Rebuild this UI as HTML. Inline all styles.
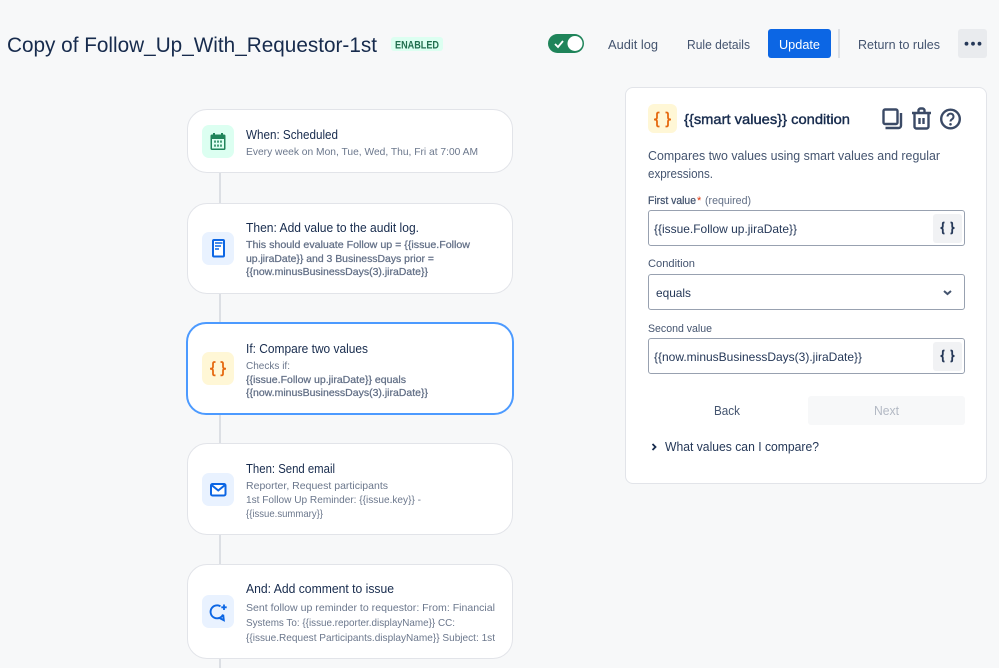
<!DOCTYPE html>
<html lang="en">
<head>
<meta charset="utf-8">
<title>Copy of Follow_Up_With_Requestor-1st</title>
<style>
html,body{margin:0;padding:0;background:#f7f8f9;}
body{width:999px;height:668px;overflow:hidden;position:relative;font-family:"Liberation Sans",sans-serif;}
.b{position:absolute;box-sizing:border-box;}
.card{left:187px;width:326px;background:#fff;border:1.5px solid #e2e4e9;border-radius:20px;}
.ic{left:202px;width:32px;height:33px;border-radius:7px;}
.inp{left:648px;width:317px;height:36px;background:#fff;border:1.5px solid #98a1b0;border-radius:3px;}
.br{left:933px;width:29px;height:29px;background:#f1f2f4;border-radius:3px;}
svg{position:absolute;left:0;top:0;}
text{font-family:"Liberation Sans",sans-serif;}
.t{font-size:12.5px;fill:#172b4d;}
.s{font-size:10.5px;fill:#6b778c;}
.sb{font-size:10.5px;fill:#626f86;stroke:#626f86;stroke-width:.25px;}
.h{font-size:12.5px;fill:#44546f;}
.l{font-size:11px;fill:#44546f;}
.v{font-size:12px;fill:#253858;}
</style>
</head>
<body>
<div class="b" style="left:219px;top:170px;width:2px;height:498px;background:#dcdfe4;"></div>

<div class="b card" style="top:109px;height:64px;"></div>
<div class="b card" style="top:203px;height:91px;"></div>
<div class="b card" style="top:322px;height:93px;left:186px;width:328px;border:2px solid #4c9aff;"></div>
<div class="b card" style="top:443px;height:92px;"></div>
<div class="b card" style="top:564px;height:95px;"></div>

<div class="b ic" style="top:125px;background:#dcfff1;"></div>
<div class="b ic" style="top:232px;background:#e9f2ff;"></div>
<div class="b ic" style="top:352px;background:#fff7d6;"></div>
<div class="b ic" style="top:473px;background:#e9f2ff;"></div>
<div class="b ic" style="top:595px;background:#e9f2ff;"></div>

<div class="b" style="left:391px;top:37px;width:52px;height:14px;background:#dcfff1;border-radius:3px;"></div>
<div class="b" style="left:548px;top:34px;width:36px;height:19px;background:#1f845a;border-radius:10px;"></div>
<div class="b" style="left:768px;top:29px;width:63px;height:29px;background:#0c66e4;border-radius:3px;"></div>
<div class="b" style="left:838px;top:29px;width:2px;height:29px;background:#dcdfe4;"></div>
<div class="b" style="left:958px;top:29px;width:29px;height:29px;background:#e9ebee;border-radius:3px;"></div>

<div class="b" style="left:625px;top:87px;width:362px;height:397px;background:#fff;border:1.5px solid #e2e4e9;border-radius:8px;"></div>
<div class="b" style="left:648px;top:104px;width:29px;height:29px;background:#fff7d6;border-radius:6px;"></div>
<div class="b inp" style="top:210px;"></div>
<div class="b inp" style="top:274px;"></div>
<div class="b inp" style="top:338px;"></div>
<div class="b br" style="top:214px;"></div>
<div class="b br" style="top:342px;"></div>
<div class="b" style="left:808px;top:396px;width:157px;height:29px;background:#f7f8f9;border-radius:3px;"></div>

<svg width="999" height="668" viewBox="0 0 999 668" xmlns="http://www.w3.org/2000/svg">
  <!-- header -->
  <text x="7" y="52" font-size="21" fill="#172b4d" textLength="370" lengthAdjust="spacingAndGlyphs">Copy of Follow_Up_With_Requestor-1st</text>
  <text x="395" y="48.500" font-size="11" font-weight="bold" fill="#216e4e" textLength="44" lengthAdjust="spacingAndGlyphs">ENABLED</text>
  <circle cx="575" cy="43.500" r="7.500" fill="#fff"/>
  <path d="M555 44l3 3 5-6" fill="none" stroke="#fff" stroke-width="1.800"/>
  <text x="608" y="49" class="h" textLength="50" lengthAdjust="spacingAndGlyphs">Audit log</text>
  <text x="687" y="49" class="h" textLength="63" lengthAdjust="spacingAndGlyphs">Rule details</text>
  <text x="779" y="49" font-size="12.500" fill="#fff" textLength="41" lengthAdjust="spacingAndGlyphs">Update</text>
  <text x="858" y="49" class="h" textLength="82" lengthAdjust="spacingAndGlyphs">Return to rules</text>
  <circle cx="966.500" cy="43.700" r="1.900" fill="#253858"/>
  <circle cx="973" cy="43.700" r="1.900" fill="#253858"/>
  <circle cx="979.500" cy="43.700" r="1.900" fill="#253858"/>

  <!-- card 1 -->
  <text x="246" y="139" class="t" textLength="92" lengthAdjust="spacingAndGlyphs">When: Scheduled</text>
  <text x="246" y="155" class="s" textLength="232" lengthAdjust="spacingAndGlyphs">Every week on Mon, Tue, Wed, Thu, Fri at 7:00 AM</text>
  <path d="M210.500 136a1.500 1.500 0 0 1 1.500-1.500h12a1.500 1.500 0 0 1 1.500 1.500v12.500a1.500 1.500 0 0 1-1.500 1.500h-12a1.500 1.500 0 0 1-1.500-1.500z" fill="#1f845a"/>
  <rect x="213" y="133" width="2" height="3" fill="#1f845a"/><rect x="221" y="133" width="2" height="3" fill="#1f845a"/>
  <rect x="212" y="139" width="12" height="9.500" fill="#dcfff1"/>
  <g fill="#1f845a">
    <rect x="214.200" y="140.500" width="1.600" height="2.200"/><rect x="217.200" y="140.500" width="1.600" height="2.200"/><rect x="220.200" y="140.500" width="1.600" height="2.200"/>
    <rect x="214.200" y="144.500" width="1.600" height="2.200"/><rect x="217.200" y="144.500" width="1.600" height="2.200"/><rect x="220.200" y="144.500" width="1.600" height="2.200"/>
  </g>

  <!-- card 2 -->
  <text x="246" y="232" class="t" textLength="173" lengthAdjust="spacingAndGlyphs">Then: Add value to the audit log.</text>
  <text x="246" y="248" class="sb" textLength="224" lengthAdjust="spacingAndGlyphs">This should evaluate Follow up = {{issue.Follow</text>
  <text x="246" y="262" class="sb" textLength="188" lengthAdjust="spacingAndGlyphs">up.jiraDate}} and 3 BusinessDays prior =</text>
  <text x="246" y="275" class="sb" textLength="182" lengthAdjust="spacingAndGlyphs">{{now.minusBusinessDays(3).jiraDate}}</text>
  <rect x="213" y="240" width="11" height="16.500" rx="1" fill="#fff" stroke="#0c66e4" stroke-width="2"/>
  <path d="M215 243h7.500M215 246h6M215 249h4" stroke="#0c66e4" stroke-width="1.500" fill="none"/>

  <!-- card 3 -->
  <text x="246" y="353" class="t" textLength="122" lengthAdjust="spacingAndGlyphs">If: Compare two values</text>
  <text x="246" y="369" class="s" textLength="44" lengthAdjust="spacingAndGlyphs">Checks if:</text>
  <text x="246" y="383" class="sb" textLength="160" lengthAdjust="spacingAndGlyphs">{{issue.Follow up.jiraDate}} equals</text>
  <text x="246" y="396" class="sb" textLength="182" lengthAdjust="spacingAndGlyphs">{{now.minusBusinessDays(3).jiraDate}}</text>
  <path d="M215.500 362h-1q-1.500 0-1.500 1.500v3.200q0 2-3 2q3 0 3 2v3.200q0 1.500 1.500 1.500h1M220.500 362h1q1.500 0 1.500 1.500v3.200q0 2 3 2q-3 0-3 2v3.200q0 1.500-1.500 1.500h-1" fill="none" stroke="#e56910" stroke-width="1.800"/>

  <!-- card 4 -->
  <text x="246" y="473" class="t" textLength="89" lengthAdjust="spacingAndGlyphs">Then: Send email</text>
  <text x="246" y="489" class="s" textLength="142" lengthAdjust="spacingAndGlyphs">Reporter, Request participants</text>
  <text x="246" y="503" class="s" textLength="175" lengthAdjust="spacingAndGlyphs">1st Follow Up Reminder: {{issue.key}} -</text>
  <text x="246" y="517" class="s" textLength="77" lengthAdjust="spacingAndGlyphs">{{issue.summary}}</text>
  <rect x="211" y="484" width="14.500" height="11.500" rx="1.500" fill="#fff" stroke="#0c66e4" stroke-width="2"/>
  <path d="M211.500 485l6.750 5.500 6.750-5.500" fill="none" stroke="#0c66e4" stroke-width="2"/>

  <!-- card 5 -->
  <text x="246" y="593" class="t" textLength="148" lengthAdjust="spacingAndGlyphs">And: Add comment to issue</text>
  <text x="246" y="611" class="s" textLength="249" lengthAdjust="spacingAndGlyphs">Sent follow up reminder to requestor: From: Financial</text>
  <text x="246" y="626" class="s" textLength="209" lengthAdjust="spacingAndGlyphs">Systems To: {{issue.reporter.displayName}} CC:</text>
  <text x="246" y="641" class="s" textLength="249" lengthAdjust="spacingAndGlyphs">{{issue.Request Participants.displayName}} Subject: 1st</text>
  <path d="M220.500 606.300a6.500 6.500 0 1 0 2.500 8.200M219.500 618l4.300 2.200-.6-5.500" fill="none" stroke="#0c66e4" stroke-width="1.900"/>
  <path d="M224 604.500v5.500M221.300 607.300h5.400" stroke="#0c66e4" stroke-width="1.800" fill="none"/>

  <!-- panel header -->
  <path d="M659.500 112.500h-1q-1.500 0-1.500 1.500v3.500q0 2-3 2q3 0 3 2v3.500q0 1.500 1.500 1.500h1M665.500 112.500h1q1.500 0 1.500 1.500v3.500q0 2 3 2q-3 0-3 2v3.500q0 1.500-1.500 1.500h-1" fill="none" stroke="#e56910" stroke-width="1.800"/>
  <text x="684" y="124" font-size="14" fill="#172b4d" stroke="#172b4d" stroke-width=".4" textLength="166" lengthAdjust="spacingAndGlyphs">{{smart values}} condition</text>
  <g fill="none" stroke="#3b4a66" stroke-width="2.400">
    <rect x="883.500" y="109.500" width="14" height="14.500" rx="1.500"/>
    <path d="M901 113v12.500a2.500 2.500 0 0 1-2.500 2.500h-13"/>
    <path d="M912 113h19M918.500 113v-2.500a2 2 0 0 1 2-2h2a2 2 0 0 1 2 2v2.500M914.500 113v13.500a2 2 0 0 0 2 2h10a2 2 0 0 0 2-2v-13.500M919.500 118v6M923.500 118v6"/>
    <circle cx="950.500" cy="119" r="9.300"/>
    <path d="M947.500 116.500a3 3 0 1 1 4.500 2.700q-1.500.8-1.500 2.300" stroke-width="2"/>
  </g>
  <circle cx="950.500" cy="124.300" r="1.300" fill="#3b4a66"/>
  <text x="648" y="160" class="h" textLength="292" lengthAdjust="spacingAndGlyphs">Compares two values using smart values and regular</text>
  <text x="648" y="178" class="h" textLength="65" lengthAdjust="spacingAndGlyphs">expressions.</text>

  <!-- fields -->
  <text x="648" y="204" font-size="11" fill="#44546f" stroke="#44546f" stroke-width=".25" textLength="48" lengthAdjust="spacingAndGlyphs">First value</text>
  <text x="697" y="204" font-size="11" fill="#de350b">*</text>
  <text x="705" y="204" class="l" fill-opacity=".85" textLength="46" lengthAdjust="spacingAndGlyphs">(required)</text>
  <text x="654" y="233" class="v" textLength="143" lengthAdjust="spacingAndGlyphs">{{issue.Follow up.jiraDate}}</text>
  <path d="M944.500 222.500h-.5q-1.200 0-1.200 1.200v2.600q0 1.700-2.300 1.700q2.300 0 2.300 1.700v2.600q0 1.200 1.200 1.200h.5M950.500 222.500h.5q1.200 0 1.200 1.200v2.600q0 1.700 2.300 1.700q-2.300 0-2.300 1.700v2.600q0 1.200-1.200 1.200h-.5" fill="none" stroke="#253858" stroke-width="1.800"/>

  <text x="648" y="267" class="l" textLength="47" lengthAdjust="spacingAndGlyphs">Condition</text>
  <text x="656" y="297" class="v" textLength="35" lengthAdjust="spacingAndGlyphs">equals</text>
  <path d="M944 291l3.500 3 3.500-3" fill="none" stroke="#44546f" stroke-width="2"/>

  <text x="648" y="332" class="l" textLength="64" lengthAdjust="spacingAndGlyphs">Second value</text>
  <text x="654" y="361" class="v" textLength="208" lengthAdjust="spacingAndGlyphs">{{now.minusBusinessDays(3).jiraDate}}</text>
  <path d="M944.500 350.500h-.5q-1.200 0-1.200 1.200v2.600q0 1.700-2.300 1.700q2.300 0 2.300 1.700v2.600q0 1.200 1.200 1.200h.5M950.500 350.500h.5q1.200 0 1.200 1.200v2.600q0 1.700 2.300 1.700q-2.300 0-2.300 1.700v2.600q0 1.200-1.200 1.200h-.5" fill="none" stroke="#253858" stroke-width="1.800"/>

  <text x="714" y="415" class="h" fill="#253858" textLength="26" lengthAdjust="spacingAndGlyphs">Back</text>
  <text x="874" y="415" font-size="12.500" fill="#b3b9c4" textLength="25" lengthAdjust="spacingAndGlyphs">Next</text>
  <path d="M652.500 444l3 3-3 3" fill="none" stroke="#172b4d" stroke-width="1.800"/>
  <text x="665" y="451" font-size="12.500" fill="#253858" textLength="154" lengthAdjust="spacingAndGlyphs">What values can I compare?</text>
</svg>
</body>
</html>
